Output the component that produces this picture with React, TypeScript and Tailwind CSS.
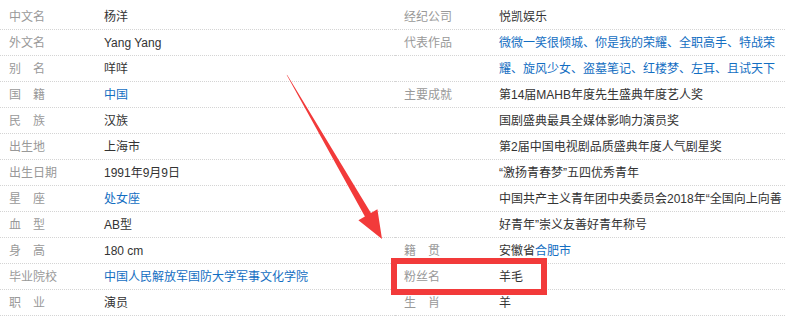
type Part = { text: string; link?: boolean };
type Row = { label: string; value: Part[] };

const leftRows: Row[] = [
  { label: '中文名', value: [{ text: '杨洋' }] },
  { label: '外文名', value: [{ text: 'Yang Yang' }] },
  { label: '别名', value: [{ text: '咩咩' }] },
  { label: '国籍', value: [{ text: '中国', link: true }] },
  { label: '民族', value: [{ text: '汉族' }] },
  { label: '出生地', value: [{ text: '上海市' }] },
  { label: '出生日期', value: [{ text: '1991年9月9日' }] },
  { label: '星座', value: [{ text: '处女座', link: true }] },
  { label: '血型', value: [{ text: 'AB型' }] },
  { label: '身高', value: [{ text: '180 cm' }] },
  { label: '毕业院校', value: [{ text: '中国人民解放军国防大学军事文化学院', link: true }] },
  { label: '职业', value: [{ text: '演员' }] },
];

const rightRows: Row[] = [
  { label: '经纪公司', value: [{ text: '悦凯娱乐' }] },
  { label: '代表作品', value: [{ text: '微微一笑很倾城、你是我的荣耀、全职高手、特战荣', link: true }] },
  { label: '', value: [{ text: '耀、旋风少女、盗墓笔记、红楼梦、左耳、且试天下', link: true }] },
  { label: '主要成就', value: [{ text: '第14届MAHB年度先生盛典年度艺人奖' }] },
  { label: '', value: [{ text: '国剧盛典最具全媒体影响力演员奖' }] },
  { label: '', value: [{ text: '第2届中国电视剧品质盛典年度人气剧星奖' }] },
  { label: '', value: [{ text: '“激扬青春梦”五四优秀青年' }] },
  { label: '', value: [{ text: '中国共产主义青年团中央委员会2018年“全国向上向善' }] },
  { label: '', value: [{ text: '好青年”崇义友善好青年称号' }] },
  { label: '籍贯', value: [{ text: '安徽省' }, { text: '合肥市', link: true }] },
  { label: '粉丝名', value: [{ text: '羊毛' }] },
  { label: '生肖', value: [{ text: '羊' }] },
];

function Label({ text }: { text: string }) {
  // two-character labels are spread over the width of three
  if (text.length === 2) {
    return (
      <span className="flex w-[36px] justify-between">
        <span>{text[0]}</span>
        <span>{text[1]}</span>
      </span>
    );
  }
  return <span>{text}</span>;
}

function InfoRow({ row }: { row: Row }) {
  return (
    <div className="flex h-[26px] items-center border-b border-dotted border-[#d4d4d4] pl-[9px] whitespace-nowrap">
      <div className="w-[95px] shrink-0 text-[#999]">{row.label && <Label text={row.label} />}</div>
      <div className="text-[#333]">
        {row.value.map((p, i) => (
          <span key={i} className={p.link ? 'text-[#136ec2]' : undefined}>
            {p.text}
          </span>
        ))}
      </div>
    </div>
  );
}

export default function App() {
  return (
    <div
      className="relative h-[320px] w-[785px] overflow-hidden bg-white pt-[4px] text-[12px]"
      style={{ fontFamily: '"Liberation Sans", "Noto Sans CJK SC", sans-serif' }}
    >
      <div className="flex">
        <div className="w-[395px] shrink-0">
          {leftRows.map((r, i) => (
            <InfoRow key={i} row={r} />
          ))}
        </div>
        <div className="min-w-0 flex-1 overflow-hidden">
          {rightRows.map((r, i) => (
            <InfoRow key={i} row={r} />
          ))}
        </div>
      </div>

      {/* red annotation: arrow and box around 粉丝名 */}
      <svg className="pointer-events-none absolute left-0 top-0" width="785" height="320">
        <polygon
          points="286.6,74.8 287.4,75.2 370.9,213 377.4,209.3 382,239 358.4,220.3 364.9,216.6"
          fill="#f23a3a"
        />
      </svg>
      <div className="pointer-events-none absolute left-[391px] top-[258px] h-[37px] w-[156px] border-[6px] border-[#f23a3a]" />
    </div>
  );
}
